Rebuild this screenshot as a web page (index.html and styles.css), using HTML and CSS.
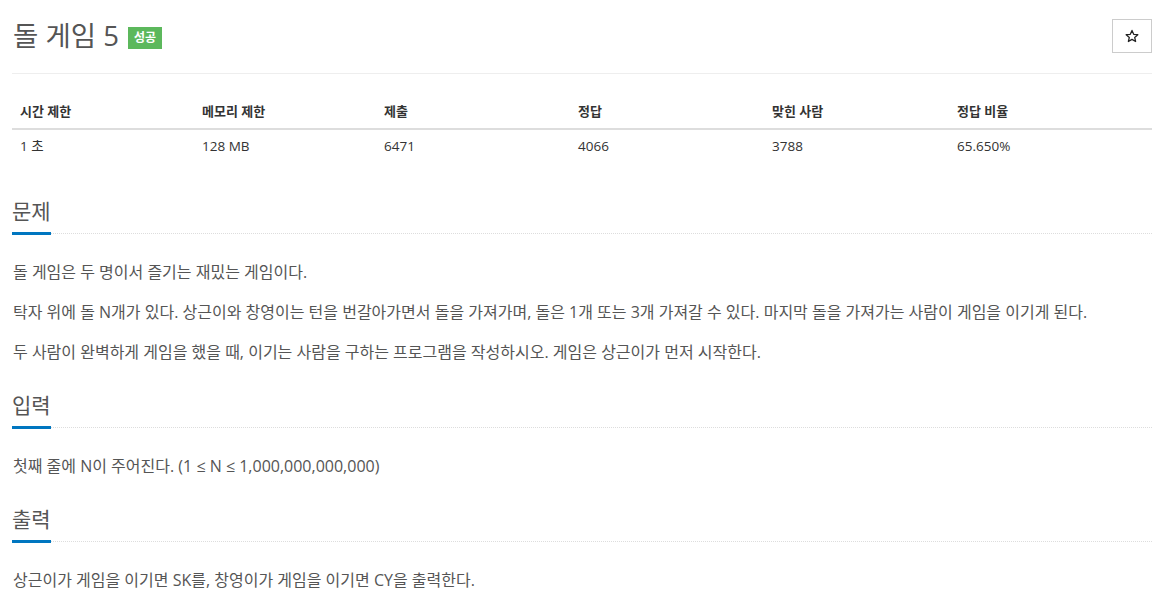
FILE: index.html
```html
<!DOCTYPE html>
<html lang="ko">
<head>
<meta charset="utf-8">
<title>돌 게임 5</title>
<link rel="stylesheet" href="styles.css">
</head>
<body>
<div class="page">
  <div class="page-header">
    <h1 class="title"><span class="title-text">돌 게임 5</span><span class="badge">성공</span></h1>
    <button class="star-btn" type="button" aria-label="즐겨찾기">
      <svg width="14" height="14" viewBox="0 0 24 24"><path d="M12 2.5l2.9 6.6 7.1.6-5.4 4.7 1.6 7-6.2-3.7-6.2 3.7 1.6-7L2 9.7l7.1-.6z" fill="none" stroke="#222" stroke-width="2.2" stroke-linejoin="round"/></svg>
    </button>
  </div>

  <table class="info">
    <thead>
      <tr>
        <th class="c1">시간 제한</th>
        <th class="c2">메모리 제한</th>
        <th class="c3">제출</th>
        <th class="c4">정답</th>
        <th class="c5">맞힌 사람</th>
        <th class="c6">정답 비율</th>
      </tr>
    </thead>
    <tbody>
      <tr>
        <td>1 초</td>
        <td>128 MB</td>
        <td>6471</td>
        <td>4066</td>
        <td>3788</td>
        <td>65.650%</td>
      </tr>
    </tbody>
  </table>

  <section class="section">
    <div class="headline"><h2>문제</h2></div>
    <p>돌 게임은 두 명이서 즐기는 재밌는 게임이다.</p>
    <p>탁자 위에 돌 N개가 있다. 상근이와 창영이는 턴을 번갈아가면서 돌을 가져가며, 돌은 1개 또는 3개 가져갈 수 있다. 마지막 돌을 가져가는 사람이 게임을 이기게 된다.</p>
    <p>두 사람이 완벽하게 게임을 했을 때, 이기는 사람을 구하는 프로그램을 작성하시오. 게임은 상근이가 먼저 시작한다.</p>
  </section>

  <section class="section">
    <div class="headline"><h2>입력</h2></div>
    <p>첫째 줄에 N이 주어진다. (1 ≤ N ≤ 1,000,000,000,000)</p>
  </section>

  <section class="section">
    <div class="headline"><h2>출력</h2></div>
    <p>상근이가 게임을 이기면 SK를, 창영이가 게임을 이기면 CY을 출력한다.</p>
  </section>
</div>
</body>
</html>
```

FILE: styles.css
```css
html, body {
  margin: 0;
  padding: 0;
  background: #fff;
}

body {
  font-family: "Open Sans", "Noto Sans CJK KR", sans-serif;
  color: #555;
}

.page {
  width: 1140px;
  margin-left: 12px;
}

.page-header {
  display: flex;
  align-items: center;
  justify-content: space-between;
  padding: 19px 0 20px;
  border-bottom: 1px solid #eee;
}

.title {
  margin: 0;
  display: flex;
  align-items: center;
  font-weight: 400;
  font-size: 27.5px;
  line-height: 34px;
  color: #555;
}

.title-text {
  margin-left: 1px;
}

.badge {
  display: inline-block;
  margin-left: 9px;
  margin-top: 4px;
  width: 34px;
  height: 22px;
  line-height: 22px;
  text-align: center;
  background: #5cb85c;
  color: #fff;
  font-size: 12px;
  font-weight: 700;
}

.star-btn {
  width: 40px;
  height: 34px;
  padding: 0;
  margin: 0;
  background: #fff;
  border: 1px solid #ccc;
  border-radius: 0;
  display: flex;
  align-items: center;
  justify-content: center;
}

.star-btn svg {
  display: block;
}

.info {
  width: 1140px;
  margin-top: 18px;
  border-collapse: collapse;
  table-layout: fixed;
}

.info th, .info td {
  box-sizing: border-box;
}

.info .c1, .info .c2 { width: 182px; }
.info .c3, .info .c4 { width: 194px; }
.info .c5 { width: 185px; }
.info .c6 { width: 203px; }

.info th {
  text-align: left;
  font-size: 13px;
  font-weight: 700;
  color: #333;
  padding: 9px 8px 7px;
  line-height: 20px;
  border-bottom: 2px solid #ddd;
}

.info td {
  text-align: left;
  font-size: 13.5px;
  color: #333;
  padding: 7px 8px;
  line-height: 18px;
}

.section {
  margin-top: 23px;
}

.section:first-of-type {
  margin-top: 34px;
}

.headline {
  border-bottom: 1px dotted #ddd;
  margin-bottom: 23px;
}

.headline h2 {
  display: inline-block;
  margin: 0 0 -2px;
  font-size: 21px;
  font-weight: 400;
  line-height: 30px;
  color: #555;
  padding-bottom: 6px;
  border-bottom: 3px solid #0076c0;
}

.section p {
  margin: 0 0 10px;
  font-size: 16px;
  line-height: 30px;
  color: #555;
  padding-left: 1px;
}
```
